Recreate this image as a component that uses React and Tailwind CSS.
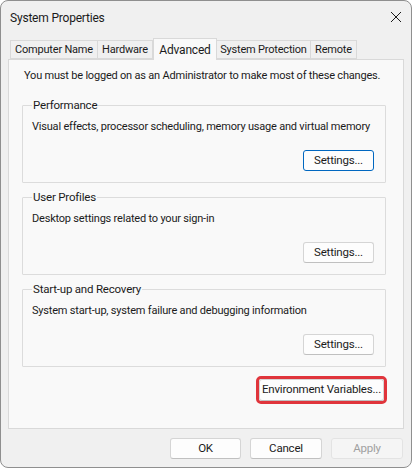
import React from "react";

const font = { fontFamily: 'Roboto, "Noto Sans", sans-serif', letterSpacing: "-0.2px" };

function Btn({ children, w = "w-[71px]", h = "h-[21px]", focus = false, disabled = false }) {
  return (
    <div
      className={`${w} ${h} flex items-center justify-center rounded-[3px] text-[11.5px] leading-none whitespace-nowrap ${
        focus
          ? "border border-[#0067c0] bg-[#fdfdfd] text-[#1b1b1b]"
          : disabled
          ? "border border-[#e3e3e3] bg-[#f5f5f5] text-[#a0a0a0]"
          : "border border-[#d5d5d5] border-b-[#c0c0c0] bg-[#fdfdfd] text-[#1b1b1b]"
      }`}
    >
      {children}
    </div>
  );
}

function Group({ title, text, top }) {
  return (
    <fieldset
      className={`ml-[13px] w-[364px] min-w-0 h-[86px] border border-[#dcdcdc] rounded-[1px] px-[9px] ${top}`}
    >
      <legend className="px-[1px] text-[11.5px] leading-[16px] text-[#1b1b1b] whitespace-nowrap">
        {title}
      </legend>
      <div className="mt-[6px] text-[11px] leading-[16px] text-[#1b1b1b] whitespace-nowrap">{text}</div>
      <div className="flex justify-end pr-[2px] mt-[15px]">
        <Btn focus={title === "Performance"}>Settings...</Btn>
      </div>
    </fieldset>
  );
}

export default function App() {
  return (
    <div className="w-[412px] h-[468px] bg-white" style={font}>
      <div className="w-[412px] h-[468px] rounded-[8px] border border-[#8f8f8f] bg-[#f0f0f0] flex flex-col overflow-hidden">
        {/* title bar */}
        <div className="h-[34px] flex items-center justify-between pl-[9px] pr-[8px] shrink-0">
          <span className="text-[12px] text-[#1b1b1b]">System Properties</span>
          <svg width="12" height="12" viewBox="0 0 12 12" className="mr-[1px] -mt-[2px]">
            <path d="M1 1 L11 11 M11 1 L1 11" stroke="#1b1b1b" strokeWidth="1" fill="none" />
          </svg>
        </div>
        {/* tabs */}
        <div className="flex items-end pl-[9px] h-[24px] shrink-0 relative z-10">
          {[
            ["Computer Name", "w-[88px]"],
            ["Hardware", "w-[56px]"],
            ["Advanced", "w-[64px]"],
            ["System Protection", "w-[95px]"],
            ["Remote", "w-[47px]"],
          ].map(([t, w]) =>
            t === "Advanced" ? (
              <div
                key={t}
                className={`${w} h-[22px] -mb-[1px] border border-b-0 border-[#d9d9d9] bg-[#f9f9f9] flex items-start justify-center pt-[2px] text-[12px] text-[#1b1b1b] whitespace-nowrap`}
              >
                {t}
              </div>
            ) : (
              <div
                key={t}
                className={`${w} h-[19px] border border-[#d9d9d9] -ml-[1px] first:ml-0 bg-[#f0f0f0] flex items-center justify-center pt-[1px] text-[11px] text-[#1b1b1b] whitespace-nowrap`}
              >
                {t}
              </div>
            )
          )}
        </div>
        {/* panel */}
        <div className="mx-[7px] h-[370px] border border-[#d9d9d9] bg-[#f9f9f9] shrink-0 flex flex-col">
          <div className="pl-[15px] pt-[8px] text-[11px] leading-[16px] text-[#1b1b1b] whitespace-nowrap">
            You must be logged on as an Administrator to make most of these changes.
          </div>
          <Group
            title="Performance"
            text="Visual effects, processor scheduling, memory usage and virtual memory"
            top="mt-[13px]"
          />
          <Group
            title="User Profiles"
            text="Desktop settings related to your sign-in"
            top="mt-[6px]"
          />
          <Group
            title="Start-up and Recovery"
            text="System start-up, system failure and debugging information"
            top="mt-[6px]"
          />
          <div className="flex justify-end pr-[16px] mt-[9px]">
            <div className="rounded-[5px] border-[3px] border-[#e0353c]">
              <Btn w="w-[125px]" h="h-[22px]">Environment Variables...</Btn>
            </div>
          </div>
        </div>
        {/* bottom buttons */}
        <div className="flex justify-end gap-[9px] pr-[8px] mt-[9px]">
          <Btn>OK</Btn>
          <Btn w="w-[72px]">Cancel</Btn>
          <Btn w="w-[72px]" disabled>
            Apply
          </Btn>
        </div>
      </div>
    </div>
  );
}
